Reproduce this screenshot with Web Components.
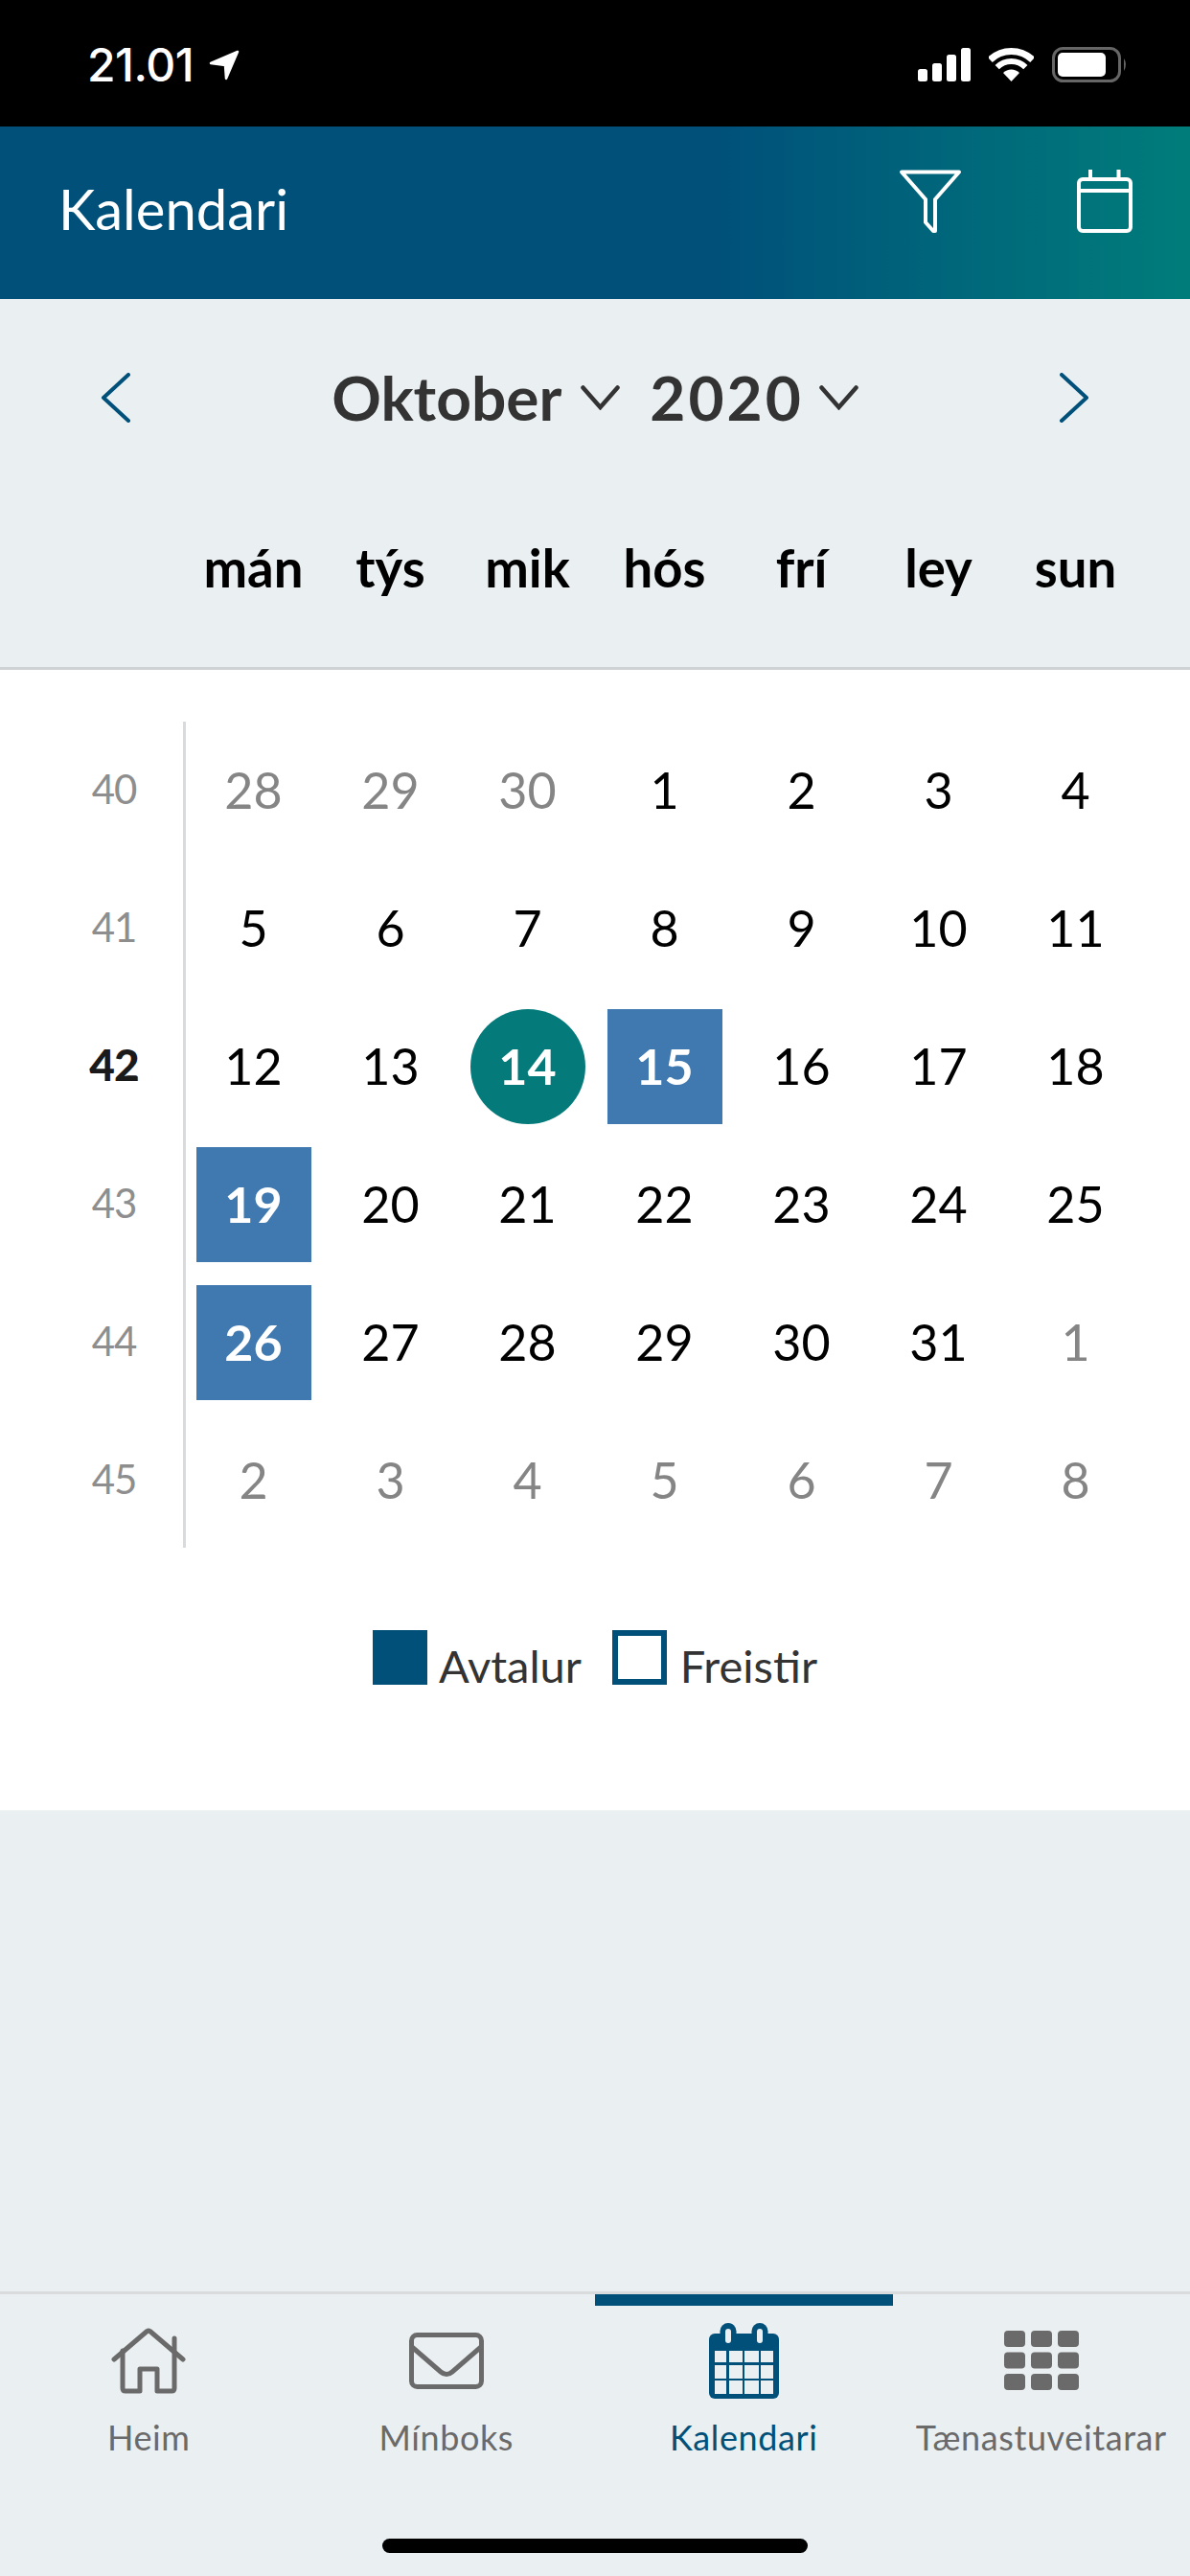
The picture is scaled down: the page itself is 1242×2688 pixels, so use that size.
<!DOCTYPE html>
<html lang="fo">
<head>
<meta charset="utf-8">
<title>Kalendari</title>
<style>
  html, body { margin: 0; padding: 0; }
  body { width: 1242px; height: 2688px; background: #eaeff2; font-family: Lato, "Liberation Sans", sans-serif; }
  #screen { display: flex; flex-direction: column; height: 2688px; }
</style>
</head>
<body>
<div id="screen">
  <status-bar></status-bar>
  <app-header title="Kalendari"></app-header>
  <month-nav month="Oktober" year="2020"></month-nav>
  <calendar-panel></calendar-panel>
  <tab-bar></tab-bar>
</div>

<script>
class StatusBar extends HTMLElement {
  constructor () {
    super()
    this.shadow = this.attachShadow({ mode: 'open' })
  }

  connectedCallback () {
    this.shadow.innerHTML = /* html */`
      <style>
        :host { display: flex; align-items: flex-start; height: 132px; background: #000; color: #fff; position: relative; }
        .time { margin: 42px 0 0 91px; font: 500 48px/52px Inter, sans-serif; letter-spacing: -0.5px; }
        .arrow { margin: 52px 0 0 16px; }
        .right { display: flex; align-items: flex-start; margin: 49px 0 0 auto; padding-right: 65px; }
        .wifi { margin: 0 19px; }
      </style>
      <span class="time">21.01</span>
      <svg class="arrow" width="32" height="32" viewBox="0 0 32 32"><path d="M30 2 L2 14 L17 16 L18 30 Z" fill="#fff" stroke="#fff" stroke-width="2.5" stroke-linejoin="round"/></svg>
      <div class="right">
        <svg width="55" height="36" viewBox="0 0 55 36" fill="#fff">
          <rect x="0" y="23" width="10" height="13" rx="2.5"/>
          <rect x="15" y="17" width="10" height="19" rx="2.5"/>
          <rect x="30" y="8" width="10" height="28" rx="2.5"/>
          <rect x="45" y="1" width="10" height="35" rx="2.5"/>
        </svg>
        <svg class="wifi" width="47" height="36" viewBox="0 0 47 36">
          <path d="M1.3 13.4 A32 32 0 0 1 45.7 13.4" fill="none" stroke="#fff" stroke-width="7"/>
          <path d="M8.7 21.2 A21 21 0 0 1 38.3 21.2" fill="none" stroke="#fff" stroke-width="6"/>
          <path d="M23.5 36 L15 27 A12 12 0 0 1 32 27 Z" fill="#fff"/>
        </svg>
        <svg width="79" height="37" viewBox="0 0 79 37">
          <rect x="1.5" y="1.5" width="69" height="34" rx="10" fill="none" stroke="#666" stroke-width="3"/>
          <rect x="6" y="6" width="50" height="25" rx="5" fill="#fff"/>
          <path d="M75 12 Q79 18 75 25 Z" fill="#666"/>
        </svg>
      </div>
    `
  }
}

class AppHeader extends HTMLElement {
  constructor () {
    super()
    this.shadow = this.attachShadow({ mode: 'open' })
  }

  connectedCallback () {
    this.shadow.innerHTML = /* html */`
      <style>
        :host { display: flex; align-items: center; height: 180px; background: linear-gradient(90deg, #00507a 60%, #007d7b 100%); color: #fff; }
        h1 { margin: 0 0 9px 61px; font: 400 58px/1 Lato, sans-serif; }
        .icons { display: flex; align-items: flex-start; gap: 120px; margin: 0 60px 24px auto; }
      </style>
      <h1>${this.getAttribute('title')}</h1>
      <div class="icons">
        <svg width="66" height="66" viewBox="0 0 66 66" fill="none" stroke="#fff" stroke-width="4" stroke-linejoin="round">
          <path d="M3 2.5 H63 L38 31 V64 H36 L28 55 V31 Z"/>
        </svg>
        <svg width="58" height="66" viewBox="0 0 58 66" fill="none" stroke="#fff" stroke-width="4" stroke-linecap="butt">
          <rect x="2" y="10" width="54" height="54" rx="4"/>
          <path d="M2 22 H56 M14 0 V10 M43.500 0 V10"/>
        </svg>
      </div>
    `
  }
}

class MonthNav extends HTMLElement {
  constructor () {
    super()
    this.shadow = this.attachShadow({ mode: 'open' })
    this.days = ['mán', 'týs', 'mik', 'hós', 'frí', 'ley', 'sun']
  }

  connectedCallback () {
    const chevronDown = `<svg class="down" width="41" height="26" viewBox="0 0 41 26" fill="none" stroke="#333" stroke-width="4.500" stroke-linecap="round"><path d="M2.500 2.500 L20.500 23 L38.500 2.500"/></svg>`
    this.shadow.innerHTML = /* html */`
      <style>
        :host { display: block; height: 384px; border-bottom: 3px solid #cfd2d4; }
        .top { display: flex; align-items: center; height: 206px; padding: 0 105px; }
        .center { display: flex; align-items: center; margin: 0 auto; color: #333; font: 700 64px/1 Lato, sans-serif; }
        .center span { display: block; }
        .year { letter-spacing: 3px; margin-right: -4px; }
        .down { margin: 0 31px 0 20px; }
        .center .down:last-child { margin-right: 0; }
        .days { display: grid; grid-template-columns: repeat(7, 143px); padding: 0 0 0 193px; margin-top: 39px; }
        .days span { text-align: center; font: 700 54.500px/70px Lato, sans-serif; color: #000; }
      </style>
      <div class="top">
        <svg width="32" height="52" viewBox="0 0 32 52" fill="none" stroke="#00507a" stroke-width="4" stroke-linecap="round" stroke-linejoin="round"><path d="M29 2 L3 26 L29 50"/></svg>
        <div class="center">
          <span>${this.getAttribute('month')}</span>${chevronDown}
          <span class="year">${this.getAttribute('year')}</span>${chevronDown}
        </div>
        <svg width="32" height="52" viewBox="0 0 32 52" fill="none" stroke="#00507a" stroke-width="4" stroke-linecap="round" stroke-linejoin="round"><path d="M3 2 L29 26 L3 50"/></svg>
      </div>
      <div class="days">
        ${this.days.map(day => `<span>${day}</span>`).join('')}
      </div>
    `
  }
}

class CalendarPanel extends HTMLElement {
  constructor () {
    super()
    this.shadow = this.attachShadow({ mode: 'open' })
    this.weeks = [
      { number: 40, days: [28, 29, 30, 1, 2, 3, 4], muted: [0, 1, 2] },
      { number: 41, days: [5, 6, 7, 8, 9, 10, 11], muted: [] },
      { number: 42, days: [12, 13, 14, 15, 16, 17, 18], muted: [], current: true },
      { number: 43, days: [19, 20, 21, 22, 23, 24, 25], muted: [] },
      { number: 44, days: [26, 27, 28, 29, 30, 31, 1], muted: [6] },
      { number: 45, days: [2, 3, 4, 5, 6, 7, 8], muted: [0, 1, 2, 3, 4, 5, 6] }
    ]
  }

  dayClass (week, index) {
    const day = week.days[index]
    if (week.muted.includes(index)) return 'day muted'
    if (day === 14) return 'day today'
    if (day === 15 || day === 19 || day === 26) return 'day event'
    return 'day'
  }

  connectedCallback () {
    this.shadow.innerHTML = /* html */`
      <style>
        :host { display: block; background: #fff; padding-top: 54px; height: 1190px; box-sizing: border-box; }
        .grid { display: grid; grid-template-columns: 193px repeat(7, 143px); grid-auto-rows: 144px; position: relative; width: 1194px; }
        .grid::before { content: ""; position: absolute; left: 191px; top: 0; bottom: 2px; width: 3px; background: #d8dadb; }
        .week { display: flex; align-items: center; justify-content: center; padding: 0 0 4px 45px; font: 400 42px/1 Lato, sans-serif; letter-spacing: -1px; color: #8e8e8e; }
        .week.current { font-size: 46px; font-weight: 900; color: #1a1a1a; }
        .cell { display: flex; align-items: center; justify-content: center; }
        .day { display: flex; align-items: center; justify-content: center; width: 120px; height: 120px; box-sizing: border-box; padding-bottom: 3px; font: 400 52px/1 Lato, sans-serif; color: #000; }
        .muted { color: #858585; }
        .today { background: #047b7a; border-radius: 50%; color: #fff; font-weight: 700; }
        .event { background: #3f79b0; color: #fff; font-weight: 700; }
        .legend { display: flex; justify-content: center; align-items: flex-end; margin: 84px 0 0 0; color: #333; font: 400 47px/1 Lato, sans-serif; }
        .swatch { width: 57px; height: 57px; box-sizing: border-box; background: #00507a; margin-right: 12px; }
        .swatch.outline { background: #fff; border: 6px solid #00507a; margin-right: 14px; }
        .legend span { margin-right: 32px; line-height: 46px; margin-bottom: -3px; }
        .legend span:last-child { margin-right: 0; }
      </style>
      <div class="grid"></div>
      <div class="legend">
        <div class="swatch"></div><span>Avtalur</span>
        <div class="swatch outline"></div><span>Freistir</span>
      </div>
    `

    const grid = this.shadow.querySelector('.grid')

    this.weeks.forEach(week => {
      const number = document.createElement('div')
      number.classList.add('week')
      if (week.current) number.classList.add('current')
      number.textContent = week.number
      grid.appendChild(number)

      week.days.forEach((day, index) => {
        const cell = document.createElement('div')
        cell.classList.add('cell')
        const inner = document.createElement('div')
        inner.className = this.dayClass(week, index)
        inner.textContent = day
        cell.appendChild(inner)
        grid.appendChild(cell)
      })
    })
  }
}

class TabItem extends HTMLElement {
  constructor () {
    super()
    this.shadow = this.attachShadow({ mode: 'open' })
  }

  connectedCallback () {
    this.shadow.innerHTML = /* html */`
      <style>
        :host { display: flex; flex-direction: column; align-items: center; position: relative; color: #6a6a6a; }
        :host([active]) { color: #00507a; }
        :host([active])::before { content: ""; position: absolute; left: 0; right: 0; top: 0; height: 12px; background: #00507a; }
        .icon { display: flex; align-items: center; justify-content: center; height: 80px; margin-top: 29px; }
        .label { margin-top: 18px; font: 400 36px/44px Lato, sans-serif; white-space: nowrap; letter-spacing: 0.6px; }
      </style>
      <div class="icon"><slot name="icon"></slot></div>
      <div class="label"><slot></slot></div>
    `
  }
}

class TabBar extends HTMLElement {
  constructor () {
    super()
    this.shadow = this.attachShadow({ mode: 'open' })
  }

  connectedCallback () {
    this.shadow.innerHTML = /* html */`
      <style>
        :host { display: block; margin-top: auto; height: 297px; border-top: 3px solid #d9dbdc; box-sizing: border-box; position: relative; }
        .tabs { display: grid; grid-template-columns: repeat(4, 310.5px); }
        .home-bar { position: absolute; left: 399px; top: 255px; width: 444px; height: 15px; border-radius: 8px; background: #000; }
      </style>
      <div class="tabs">
        <tab-item>
          <svg slot="icon" width="78" height="69" viewBox="0 0 78 69" fill="none" stroke="#6a6a6a" stroke-width="5" stroke-linecap="round" stroke-linejoin="round">
            <path d="M3 33 L37.500 3.500 Q39 2.500 40.500 3.500 L75 33"/>
            <path d="M12 24 V63 Q12 66 15 66 H30 V43 H48 V66 H63 Q66 66 66 63 V11"/>
          </svg>
          Heim
        </tab-item>
        <tab-item>
          <svg slot="icon" width="78" height="59" viewBox="0 0 78 59" fill="none" stroke="#6a6a6a" stroke-width="5">
            <rect x="2.500" y="2.500" width="73" height="54" rx="6"/>
            <path d="M3 15 L33 41 Q39 46 45 41 L75 15"/>
          </svg>
          Mínboks
        </tab-item>
        <tab-item active>
          <svg slot="icon" width="73" height="79" viewBox="0 0 73 79">
            <rect x="0" y="11" width="73" height="68" rx="6" fill="#00507a"/>
            <rect x="11.500" y="0" width="17" height="26" rx="8.500" fill="#00507a"/>
            <rect x="44.500" y="0" width="17" height="26" rx="8.500" fill="#00507a"/>
            <rect x="17" y="6" width="6" height="15" rx="3" fill="#eaeff2"/>
            <rect x="50" y="6" width="6" height="15" rx="3" fill="#eaeff2"/>
            <g fill="#eaeff2">
              <rect x="6" y="29" width="12" height="12"/><rect x="21" y="29" width="14" height="12"/><rect x="37" y="29" width="15" height="12"/><rect x="54" y="29" width="13" height="12"/>
              <rect x="6" y="44" width="12" height="14"/><rect x="21" y="44" width="14" height="14"/><rect x="37" y="44" width="15" height="14"/><rect x="54" y="44" width="13" height="14"/>
              <rect x="6" y="60" width="12" height="14"/><rect x="21" y="60" width="14" height="14"/><rect x="37" y="60" width="15" height="14"/><rect x="54" y="60" width="13" height="14"/>
            </g>
          </svg>
          Kalendari
        </tab-item>
        <tab-item>
          <svg slot="icon" width="78" height="62" viewBox="0 0 78 62" fill="#6a6a6a">
            <rect x="0" y="0" width="22" height="17" rx="4"/><rect x="28" y="0" width="22" height="17" rx="4"/><rect x="56" y="0" width="22" height="17" rx="4"/>
            <rect x="0" y="22.500" width="22" height="17" rx="4"/><rect x="28" y="22.500" width="22" height="17" rx="4"/><rect x="56" y="22.500" width="22" height="17" rx="4"/>
            <rect x="0" y="45" width="22" height="17" rx="4"/><rect x="28" y="45" width="22" height="17" rx="4"/><rect x="56" y="45" width="22" height="17" rx="4"/>
          </svg>
          Tænastuveitarar
        </tab-item>
      </div>
      <div class="home-bar"></div>
    `
  }
}

customElements.define('status-bar', StatusBar)
customElements.define('app-header', AppHeader)
customElements.define('month-nav', MonthNav)
customElements.define('calendar-panel', CalendarPanel)
customElements.define('tab-item', TabItem)
customElements.define('tab-bar', TabBar)
</script>
</body>
</html>
